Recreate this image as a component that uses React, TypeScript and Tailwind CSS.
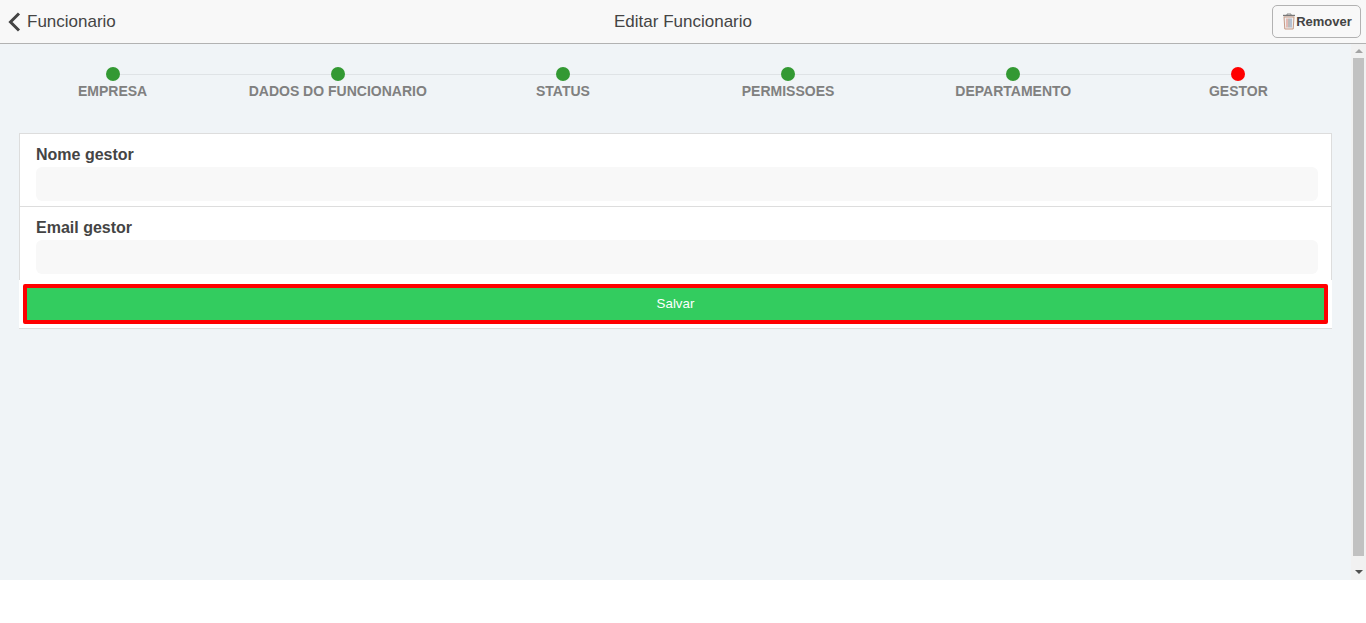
const steps = ['EMPRESA', 'DADOS DO FUNCIONARIO', 'STATUS', 'PERMISSOES', 'DEPARTAMENTO', 'GESTOR'];

function TrashIcon() {
  return (
    <svg width="14" height="17" viewBox="0 0 14 17" fill="none" className="shrink-0">
      <path d="M5 2V1h4v1" stroke="#8a8a8a" strokeWidth="1" />
      <path d="M1 2.5h12" stroke="#777" strokeWidth="1.4" />
      <path d="M2 4h10l-.8 12H2.8z" fill="#eee" stroke="#c79a86" strokeWidth="1" />
      <path d="M5 5.5v9" stroke="#d9867a" strokeWidth="1" />
      <path d="M7 5.5v9" stroke="#888" strokeWidth="1" />
      <path d="M9 5.5v9" stroke="#7d93b5" strokeWidth="1" />
    </svg>
  );
}

function Field({ label, bordered }: { label: string; bordered?: boolean }) {
  return (
    <div className={bordered ? 'h-[73px] border-b border-[#ddd] pl-4 pr-[13px] pt-[10px]' : 'h-[73px] pl-4 pr-[13px] pt-[10px]'}>
      <div className="text-base leading-[22px] font-bold text-[#444]">{label}</div>
      <div className="mt-[1px] h-[34px] rounded-md bg-[#f8f8f8]" />
    </div>
  );
}

export default function App() {
  return (
    <div className="h-[623px] bg-white font-['Liberation_Sans',Arial,sans-serif] overflow-hidden">
      <header className="h-[44px] flex items-center justify-between border-b border-[#b2b2b2] bg-[#f8f8f8] text-[#444]">
        <div className="w-[200px] flex items-center pl-2">
          <svg width="13" height="20" viewBox="0 0 13 20" fill="none" className="shrink-0">
            <path d="M11 1.5 2.5 10l8.5 8.5" stroke="#444" strokeWidth="3" />
          </svg>
          <span className="text-[17px] ml-[6px]">Funcionario</span>
        </div>
        <div className="text-[17px]">Editar Funcionario</div>
        <div className="w-[200px] flex justify-end pr-[5px]">
          <button className="h-[33px] w-[89px] flex items-center justify-center rounded-[5px] border border-[#b2b2b2] pl-[1px] text-[13px] font-bold text-[#444]">
            <TrashIcon />
            <span>Remover</span>
          </button>
        </div>
      </header>

      <div className="h-[536px] flex bg-[#f0f4f7]">
        <main className="flex-1 min-w-0">
          <div className="grid grid-cols-6 pt-[23px]">
            {steps.map((s, i) => (
              <div key={s} className="flex flex-col items-center">
                <div className="w-full flex items-center">
                  <div className={i === 0 ? 'flex-1 h-px' : 'flex-1 h-px bg-[#dfe3e6]'} />
                  <div className={i === 5 ? 'h-[14px] w-[14px] rounded-full bg-[#ff0000]' : 'h-[14px] w-[14px] rounded-full bg-[#339933]'} />
                  <div className={i === 5 ? 'flex-1 h-px' : 'flex-1 h-px bg-[#dfe3e6]'} />
                </div>
                <div className="mt-[1px] text-sm leading-[18px] font-bold text-[#808080] whitespace-nowrap">{s}</div>
              </div>
            ))}
          </div>

          <div className="mt-[33px] ml-[19px] w-[1313px]">
            <div className="border border-b-0 border-[#ddd] bg-white">
              <Field label="Nome gestor" bordered />
              <Field label="Email gestor" />
            </div>
            <div className="h-[49px] border-b border-[#ddd] bg-white pl-1 pr-[4px] pt-[4px]">
              <button className="h-10 w-[1305px] rounded-[2px] border-4 border-[#ff0000] bg-[#33cc5f] text-[13.33px] text-white">Salvar</button>
            </div>
          </div>
        </main>

        {/* scrollbar */}
        <div className="w-[15px] flex flex-col items-center bg-[#f1f1f1]">
          <div className="h-[14px] flex items-center justify-center">
            <div className="border-x-[4px] border-b-[4px] border-x-transparent border-b-[#a3a3a3]" />
          </div>
          <div className="w-[11px] h-[498px] bg-[#c1c1c1]" />
          <div className="flex-1 flex items-end justify-center pb-[6px]">
            <div className="border-x-[4px] border-t-[4px] border-x-transparent border-t-[#505050]" />
          </div>
        </div>
      </div>
    </div>
  );
}
